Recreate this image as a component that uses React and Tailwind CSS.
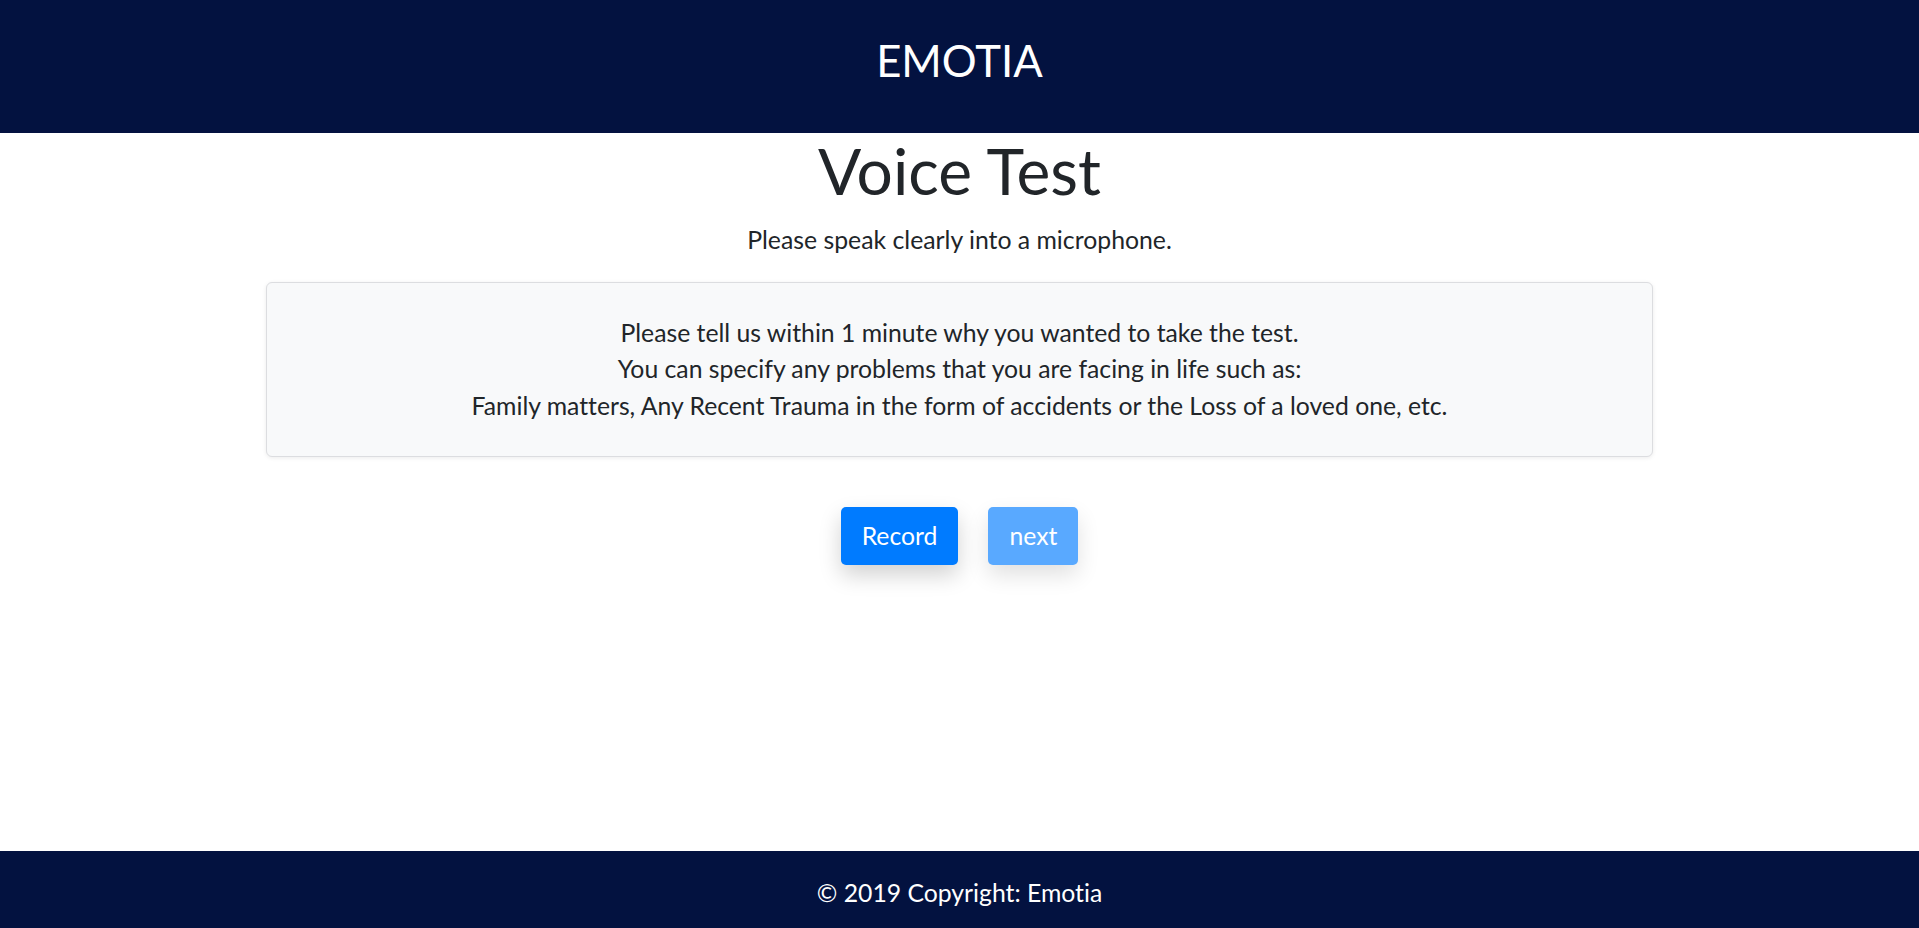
import React from 'react';

const App = () => {
  return (
    <div className="min-h-screen flex flex-col bg-white text-[#212529] [font-variant-ligatures:none]" style={{ fontFamily: 'Lato, "Open Sans", sans-serif' }}>
      <header className="h-[133px] bg-[#031240] text-white text-center pt-[34px]">
        <h3 className="text-[43.6px] leading-[1.2] font-normal">EMOTIA</h3>
      </header>

      <main className="flex-1 text-center">
        <h1 className="text-[64px] leading-[1.2] font-normal">Voice Test</h1>
        <p className="mt-[12px] text-[24.8px] leading-[36px]">Please speak clearly into a microphone.</p>

        <div className="mx-auto mt-[24px] w-[1387px] rounded-[6px] border border-[#dcdde0] bg-[#f8f9fa] py-[32px] shadow-[0_1px_4px_rgba(0,0,0,0.08)]">
          <p className="text-[24.75px] leading-[36.5px]">
            Please tell us within 1 minute why you wanted to take the test.
            <br />
            You can specify any problems that you are facing in life such as:
            <br />
            Family matters, Any Recent Trauma in the form of accidents or the Loss of a loved one, etc.
          </p>
        </div>

        <div className="mt-[50px] flex justify-center gap-[30px]">
          <button className="h-[58px] px-[21px] rounded-[5px] bg-[#007bff] text-white text-[24.75px] leading-[36px] shadow-[0_10px_22px_rgba(0,0,0,0.18)]">
            Record
          </button>
          <button disabled className="h-[58px] px-[21px] rounded-[5px] bg-[#59a9ff] text-white text-[24.75px] leading-[36px] shadow-[0_10px_22px_rgba(0,0,0,0.12)]">
            next
          </button>
        </div>
      </main>

      <footer className="h-[77px] bg-[#031240] text-white text-center pt-[24px]">
        <p className="text-[24.75px] leading-[36px]">© 2019 Copyright: Emotia</p>
      </footer>
    </div>
  );
};

export default App;
